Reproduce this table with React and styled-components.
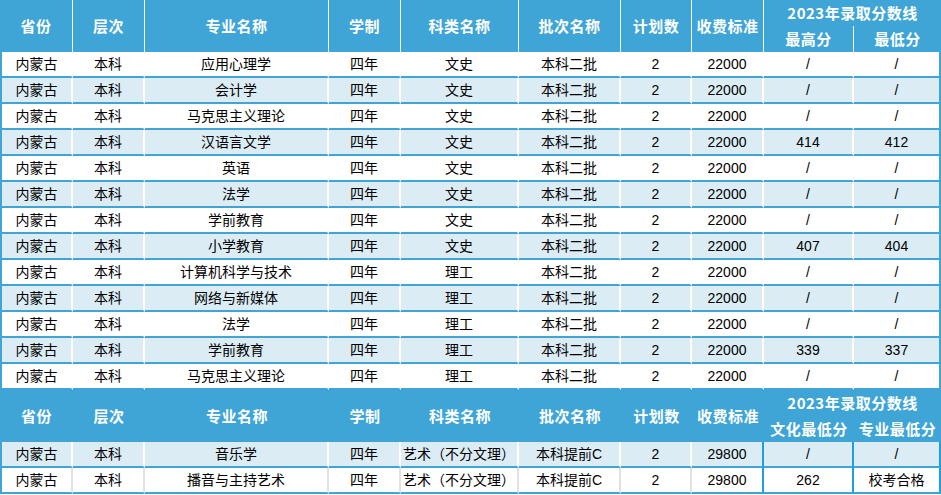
import React from "react";
import styled, { createGlobalStyle } from "styled-components";

const BLUE = "#3ea5d6";
const LIGHT = "#dbecf5";
const BRIGHT = "#1c9fe3";
const GRAY = "#e2e2e2";

const GlobalStyle = createGlobalStyle`
  html, body {
    margin: 0;
    padding: 0;
    background: #ffffff;
  }
  body {
    font-family: "Liberation Sans", "Noto Sans CJK SC", sans-serif;
  }
`;

const Sheet = styled.table`
  width: 941px;
  table-layout: fixed;
  border-collapse: separate;
  border-spacing: 0;
`;

const HeadCell = styled.th`
  background: ${BLUE};
  color: #ffffff;
  font-family: "Noto Sans CJK SC", sans-serif;
  font-weight: 700;
  font-size: 15px;
  letter-spacing: 0.5px;
  height: 26px;
  line-height: 26px;
  padding: 0;
  box-sizing: border-box;
  text-align: center;
  white-space: nowrap;
  border-right: ${(p) => (p.$line ? "1px solid #f2f8fc" : "none")};
`;

const Cell = styled.td`
  height: 24px;
  line-height: 24px;
  padding: 0;
  font-size: 14px;
  color: #000000;
  text-align: center;
  white-space: nowrap;
  background: ${(p) => (p.$light ? LIGHT : "#ffffff")};
  border-bottom: 2px solid ${BLUE};
  border-right: 2px solid ${(p) => p.$edge || "#ffffff"};
  border-left: ${(p) => (p.$first ? `2px solid ${BLUE}` : "none")};
`;

const widths = [73, 72, 184, 72, 118, 102, 71, 72, 90, 87];

const heads = ["省份", "层次", "专业名称", "学制", "科类名称", "批次名称", "计划数", "收费标准"];

const rows = [
  ["应用心理学", "文史", "/", "/"],
  ["会计学", "文史", "/", "/"],
  ["马克思主义理论", "文史", "/", "/"],
  ["汉语言文学", "文史", "414", "412"],
  ["英语", "文史", "/", "/"],
  ["法学", "文史", "/", "/"],
  ["学前教育", "文史", "/", "/"],
  ["小学教育", "文史", "407", "404"],
  ["计算机科学与技术", "理工", "/", "/"],
  ["网络与新媒体", "理工", "/", "/"],
  ["法学", "理工", "/", "/"],
  ["学前教育", "理工", "339", "337"],
  ["马克思主义理论", "理工", "/", "/"],
];

const artRows = [
  ["音乐学", "/", "/"],
  ["播音与主持艺术", "262", "校考合格"],
];

const Header = ({ lines, sub }) => (
  <>
    <tr>
      {heads.map((h) => (
        <HeadCell key={h} rowSpan={2} $line={lines}>
          {h}
        </HeadCell>
      ))}
      <HeadCell colSpan={2}>2023年录取分数线</HeadCell>
    </tr>
    <tr>
      <HeadCell $line={lines}>{sub[0]}</HeadCell>
      <HeadCell>{sub[1]}</HeadCell>
    </tr>
  </>
);

export default function App() {
  return (
    <>
      <GlobalStyle />
      <Sheet>
        <colgroup>
          {widths.map((w, i) => (
            <col key={i} style={{ width: w }} />
          ))}
        </colgroup>
        <tbody>
          <Header lines sub={["最高分", "最低分"]} />
          {rows.map((r, i) => {
            const light = i % 2 === 1;
            const vals = ["内蒙古", "本科", r[0], "四年", r[1], "本科二批", "2", "22000", r[2], r[3]];
            return (
              <tr key={i}>
                {vals.map((v, j) => (
                  <Cell key={j} $light={light} $first={j === 0} $edge={j === 9 ? BLUE : null}>
                    {v}
                  </Cell>
                ))}
              </tr>
            );
          })}
          <Header sub={["文化最低分", "专业最低分"]} />
          {artRows.map((r, i) => {
            const light = i === 0;
            const vals = ["内蒙古", "本科", r[0], "四年", "艺术（不分文理）", "本科提前C", "2", "29800", r[1], r[2]];
            return (
              <tr key={i}>
                {vals.map((v, j) => (
                  <Cell
                    key={j}
                    $light={light}
                    $first={j === 0}
                    $edge={j >= 7 ? BRIGHT : light ? "#ffffff" : GRAY}
                  >
                    {v}
                  </Cell>
                ))}
              </tr>
            );
          })}
        </tbody>
      </Sheet>
    </>
  );
}
